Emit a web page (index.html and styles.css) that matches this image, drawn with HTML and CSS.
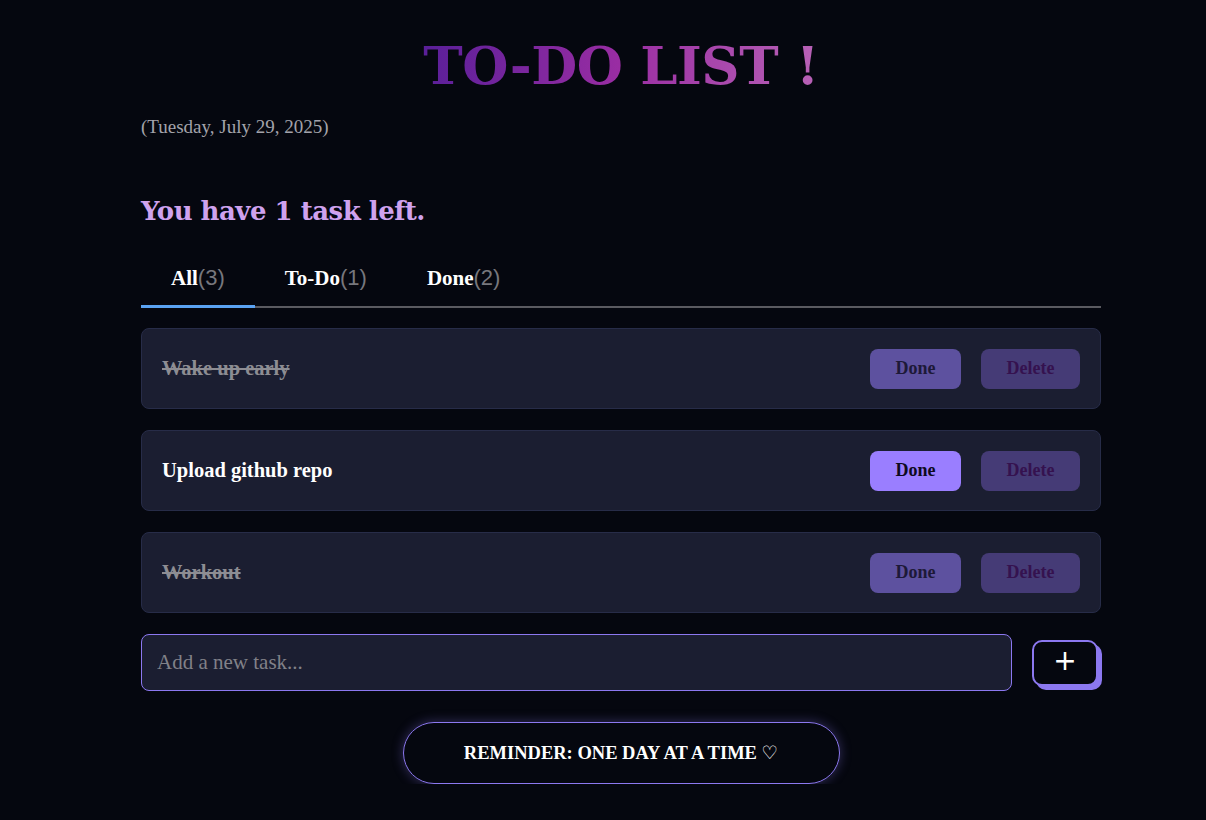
FILE: index.html
```html
<!DOCTYPE html>
<html lang="en">
<head>
<meta charset="utf-8">
<title>To-Do List</title>
<link rel="stylesheet" href="styles.css">
</head>
<body>
<main class="app">
  <h1 class="title">TO-DO LIST !</h1>
  <p class="date">(Tuesday, July 29, 2025)</p>
  <h2 class="summary">You have 1 task left.</h2>
  <nav class="tabs">
    <button class="tab active">All<span class="count">(3)</span></button>
    <button class="tab">To-Do<span class="count">(1)</span></button>
    <button class="tab">Done<span class="count">(2)</span></button>
  </nav>
  <ul class="tasks">
    <li class="task done">
      <span class="task-text">Wake up early</span>
      <div class="actions">
        <button class="btn btn-done">Done</button>
        <button class="btn btn-delete">Delete</button>
      </div>
    </li>
    <li class="task">
      <span class="task-text">Upload github repo</span>
      <div class="actions">
        <button class="btn btn-done">Done</button>
        <button class="btn btn-delete">Delete</button>
      </div>
    </li>
    <li class="task done">
      <span class="task-text">Workout</span>
      <div class="actions">
        <button class="btn btn-done">Done</button>
        <button class="btn btn-delete">Delete</button>
      </div>
    </li>
  </ul>
  <form class="add-row">
    <input class="add-input" type="text" placeholder="Add a new task...">
    <button class="add-btn" type="button">+</button>
  </form>
  <div class="reminder-wrap">
    <div class="reminder">REMINDER: ONE DAY AT A TIME ♡</div>
  </div>
</main>
</body>
</html>
```

FILE: styles.css
```css
* { box-sizing: border-box; }
html, body { margin: 0; }
body {
  background: #05070f;
  color: #fff;
  font-family: "Liberation Serif", "DejaVu Serif", serif;
  padding-left: 36px;
}
.app {
  width: 960px;
  margin: 0 auto;
  padding-top: 25px;
}
.title {
  width: fit-content;
  margin: 0 auto;
  white-space: nowrap;
  font-family: "DejaVu Serif", serif;
  font-weight: 900;
  font-size: 53px;
  line-height: 80px;
  letter-spacing: -0.5px;
  background: linear-gradient(90deg, #5a1f99 0%, #9a2da3 50%, #b862b6 100%);
  -webkit-background-clip: text;
  background-clip: text;
  color: transparent;
}
.date {
  margin: 8px 0 0;
  font-size: 19px;
  line-height: 28px;
  color: #a3a3ab;
}
.summary {
  margin: 50px 0 0;
  font-family: "DejaVu Serif", serif;
  font-size: 26px;
  line-height: 40px;
  font-weight: bold;
  color: #cfa2ee;
  letter-spacing: -0.5px;
}
.tabs {
  display: flex;
  margin-top: 21px;
  border-bottom: 2px solid #5a5a60;
}
.tab {
  background: none;
  border: none;
  padding: 14px 30px 15px;
  font-family: "Liberation Serif", serif;
  font-weight: bold;
  font-size: 21px;
  line-height: 24px;
  color: #fff;
  margin-bottom: -2px;
  border-bottom: 3px solid transparent;
  cursor: pointer;
}
.tab.active { border-bottom-color: #5aa2f2; }
.tab .count { font-weight: normal; color: #77777d; font-family: "Liberation Sans", sans-serif; font-size: 22px; }
.tasks {
  list-style: none;
  margin: 20px 0 0;
  padding: 0;
  display: flex;
  flex-direction: column;
  gap: 21px;
}
.task {
  display: flex;
  align-items: center;
  justify-content: space-between;
  background: #1b1e31;
  border: 1px solid #272c48;
  border-radius: 8px;
  padding: 19.5px 20px;
}
.task-text {
  font-size: 20.5px;
  font-weight: bold;
  color: #fff;
}
.task.done .task-text {
  color: #8d8d93;
  text-decoration: line-through;
}
.actions { display: flex; gap: 20px; }
.btn {
  height: 40px;
  border: none;
  border-radius: 8px;
  font-family: "Liberation Serif", serif;
  font-weight: bold;
  font-size: 18px;
  cursor: pointer;
}
.btn-done { width: 91px; background: #9a7eff; color: #0e0a1e; }
.task.done .btn-done { background: #5d519f; color: #1d1938; }
.btn-delete { width: 99px; background: #453b76; color: #35124f; }
.add-row {
  display: flex;
  align-items: center;
  gap: 20px;
  margin-top: 21px;
}
.add-input {
  width: 871px;
  height: 57px;
  background: #1b1e31;
  border: 1px solid #8c78f0;
  border-radius: 8px;
  padding: 0 15px;
  font-family: "Liberation Serif", serif;
  font-size: 21px;
  color: #fff;
}
.add-input::placeholder { color: #818188; }
.add-btn {
  width: 66px;
  height: 46px;
  background: #05070f;
  border: 2px solid #8c78f0;
  border-radius: 10px;
  box-shadow: 4px 4px 0 #8c78f0;
  color: #fff;
  font-family: "DejaVu Sans", sans-serif;
  font-weight: normal;
  font-size: 28px;
  line-height: 1;
  padding: 0 0 3px;
}
.reminder-wrap { display: flex; justify-content: center; margin-top: 31px; }
.reminder {
  width: 437px;
  height: 62px;
  border: 1px solid #8c78f0;
  border-radius: 31px;
  box-shadow: 0 0 12px rgba(140, 120, 240, 0.35);
  display: flex;
  align-items: center;
  justify-content: center;
  font-size: 18.5px;
  font-weight: bold;
  color: #fff;
}
```
